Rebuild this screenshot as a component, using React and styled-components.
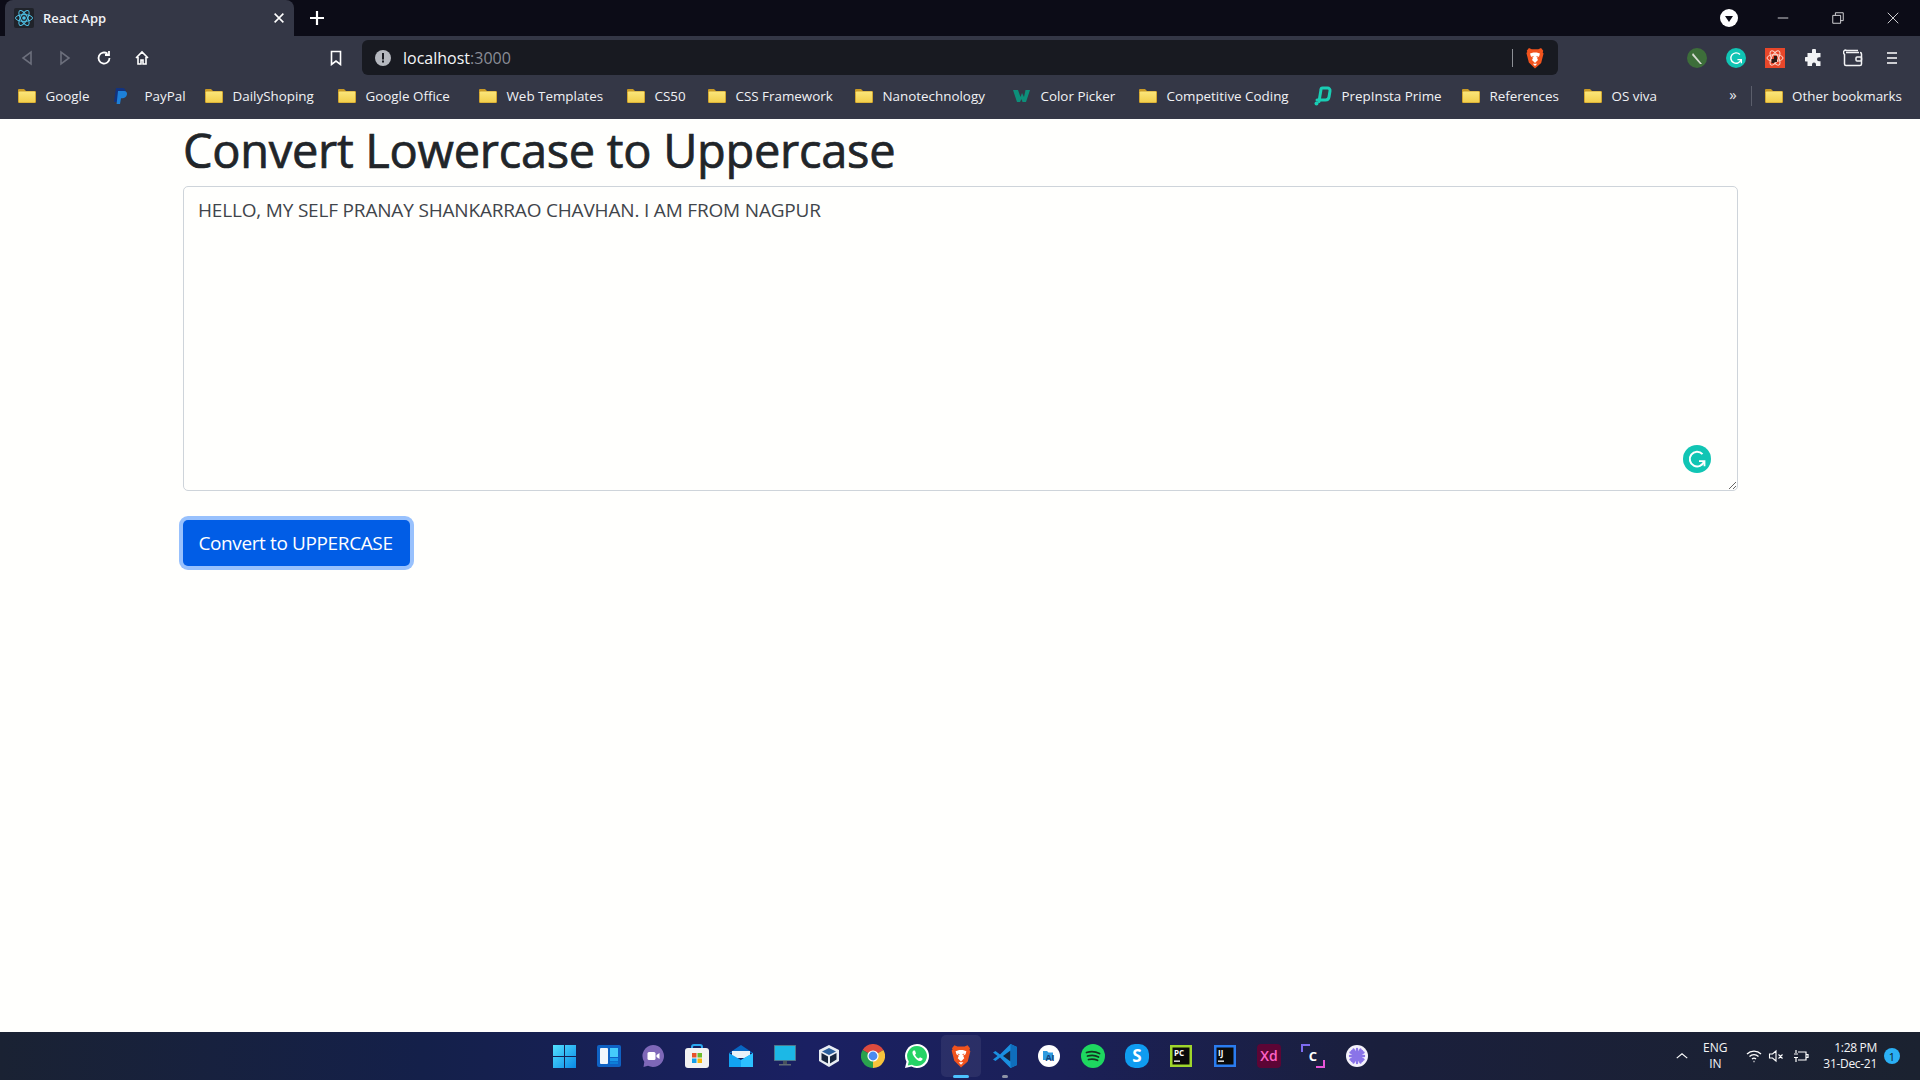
import React from 'react';
import styled, { createGlobalStyle } from 'styled-components';

const UI_FONT = `'Open Sans', 'Noto Sans', 'Liberation Sans', sans-serif`;

const GlobalStyle = createGlobalStyle`
    html, body { margin: 0; padding: 0; background: #fffffd; }
    body { font-family: ${UI_FONT}; }
`;

const Screen = styled.div`
    display: flex;
    flex-direction: column;
    width: 1920px;
    height: 1080px;
    overflow: hidden;
`;

/* ---------- browser chrome ---------- */

const TabStrip = styled.div`
    display: flex;
    align-items: flex-end;
    height: 36px;
    flex: none;
    background: #0c0c17;
`;

const Tab = styled.div`
    display: flex;
    align-items: center;
    width: 289px;
    height: 36px;
    margin-left: 5px;
    padding: 0 8px 0 9px;
    box-sizing: border-box;
    background: #343746;
    border-radius: 8px 8px 0 0;
    color: #f2f3f6;
`;

const TabTitle = styled.span`
    flex: 1;
    margin-left: 9px;
    font-size: 13px;
    font-weight: 600;
`;

const NewTab = styled.div`
    display: flex;
    width: 24px;
    height: 36px;
    margin-left: 11px;
    align-items: center;
    justify-content: center;
`;

const WindowControls = styled.div`
    display: flex;
    align-items: center;
    height: 36px;
    margin-left: auto;
`;

const ProfileSlot = styled.div`
    display: flex;
    margin-right: 17px;
`;

const WindowButton = styled.div`
    display: flex;
    width: 55px;
    height: 36px;
    align-items: center;
    justify-content: center;
`;

const Toolbar = styled.div`
    display: flex;
    align-items: flex-end;
    height: 39px;
    flex: none;
    background: #343746;
`;

const NavButton = styled.div`
    display: flex;
    width: 38.3px;
    height: 35px;
    align-items: center;
    justify-content: center;
`;

const NavGroup = styled.div`
    display: flex;
    width: 160px;
    padding-left: 8px;
`;

const BookmarkSlot = styled.div`
    display: flex;
    width: 194px;
    height: 35px;
    padding-right: 18px;
    box-sizing: border-box;
    align-items: center;
    justify-content: flex-end;
`;

const Omnibox = styled.div`
    display: flex;
    align-items: center;
    width: 1196px;
    height: 35px;
    padding: 0 12px 0 12px;
    box-sizing: border-box;
    background: #181a21;
    border-radius: 6px;
`;

const Url = styled.span`
    margin-left: 11px;
    font-size: 16px;
    color: #f4f5f7;
`;

const UrlPort = styled.span`
    color: #8a8d96;
`;

const OmniDivider = styled.div`
    width: 1px;
    height: 18px;
    margin-left: auto;
    margin-right: 11px;
    background: #8d9096;
`;

const Extensions = styled.div`
    display: flex;
    align-items: center;
    height: 35px;
    margin-left: auto;
    padding-right: 9px;
`;

const ExtensionSlot = styled.div`
    display: flex;
    width: 39px;
    align-items: center;
    justify-content: center;
`;

const BookmarkBar = styled.div`
    display: flex;
    align-items: center;
    height: 44px;
    flex: none;
    padding: 0 0 2px 18px;
    background: #343746;
    box-sizing: border-box;
`;

const BookmarkItem = styled.div`
    display: flex;
    align-items: center;
    flex: 0 0 ${props => props.$width}px;
    gap: 9.5px;
`;

const BookmarkLabel = styled.span`
    font-size: 13.4px;
    color: #f1f2f5;
    white-space: nowrap;
`;

const BarOverflow = styled.div`
    margin-left: auto;
    color: #e6e7ea;
    font-size: 15px;
    line-height: 15px;
    padding-bottom: 4px;
`;

const BarDivider = styled.div`
    width: 1px;
    height: 20px;
    margin: 0 13px 0 14px;
    background: #5b5e6b;
`;

const OtherBookmarks = styled(BookmarkItem)`
    padding-right: 18px;
`;

/* ---------- the page ---------- */

const Page = styled.main`
    flex: 1;
    padding: 2px 182px 0 183px;
    background: #fffffd;
`;

const Heading = styled.h1`
    margin: 0 0 6.6px;
    font-size: 47px;
    font-weight: 400;
    line-height: 58px;
    letter-spacing: -0.3px;
    color: #212529;
    -webkit-text-stroke: 0.7px #212529;
`;

const EditorWrap = styled.div`
    position: relative;
    height: 305px;
    margin-bottom: 29px;
`;

const Editor = styled.textarea`
    display: block;
    width: 100%;
    height: 100%;
    padding: 9px 14px;
    box-sizing: border-box;
    border: 1px solid #ced4da;
    border-radius: 5px;
    outline: none;
    background: #fffffd;
    color: #3f454b;
    font-family: ${UI_FONT};
    font-size: 19px;
    line-height: 29px;
    letter-spacing: -0.18px;
`;

const GrammarlyBadge = styled.div`
    position: absolute;
    right: 27px;
    bottom: 18px;
    display: flex;
`;

const PrimaryButton = styled.button`
    display: block;
    width: 227px;
    height: 46px;
    padding: 0 2px 0 0;
    border: 0;
    border-radius: 5px;
    background: #015de6;
    box-shadow: 0 0 0 4px #98c1fd;
    color: #fff;
    font-family: ${UI_FONT};
    font-size: 19px;
    letter-spacing: -0.38px;
`;

/* ---------- windows taskbar ---------- */

const Taskbar = styled.div`
    display: grid;
    grid-template-columns: 1fr auto 1fr;
    align-items: center;
    height: 48px;
    flex: none;
    background: linear-gradient(90deg, #1a2233 0%, #14204a 22%, #1a2062 42%, #1b2058 55%, #1a1f3c 72%, #1b2230 100%);
`;

const TaskIcons = styled.div`
    display: flex;
    grid-column: 2;
    height: 48px;
    padding-left: 1px;
`;

const TaskSlot = styled.div`
    position: relative;
    display: flex;
    width: 44px;
    height: 48px;
    align-items: center;
    justify-content: center;
    ${props => props.$active && `
        &::before {
            content: '';
            position: absolute;
            left: 2px;
            right: 2px;
            top: 3px;
            bottom: 3px;
            border-radius: 5px;
            background: rgba(255, 255, 255, 0.07);
        }
    `}
    svg { position: relative; }
`;

const RunDot = styled.span`
    position: absolute;
    left: 50%;
    bottom: 2px;
    height: 3px;
    width: ${props => props.$wide ? 16 : 6}px;
    margin-left: ${props => props.$wide ? -8 : -3}px;
    border-radius: 2px;
    background: ${props => props.$wide ? '#4cc2ff' : '#8e93a6'};
`;

const Tray = styled.div`
    display: flex;
    grid-column: 3;
    align-items: center;
    justify-content: flex-end;
    height: 48px;
    padding-right: 20px;
    color: #f4f5f7;
`;

const TrayGroup = styled.div`
    display: flex;
    align-items: center;
    margin-right: ${props => props.$gap}px;
`;

const Language = styled.div`
    width: 34px;
    margin-right: 14px;
    font-size: 12px;
    line-height: 16px;
    text-align: center;
`;

const Clock = styled.div`
    font-size: 12px;
    line-height: 16px;
    letter-spacing: -0.3px;
    text-align: right;
    margin-right: 7px;
`;

const NotificationBadge = styled.div`
    display: flex;
    width: 16px;
    height: 16px;
    align-items: center;
    justify-content: center;
    border-radius: 50%;
    background: #2bb0f5;
    color: #0b1b2a;
    font-size: 11px;
`;

/* ---------- icons ---------- */

const FolderIcon = () => (
    <svg width="18" height="16" viewBox="0 0 18 16">
        <defs>
            <linearGradient id="folderFill" x1="0" y1="0" x2="0" y2="1">
                <stop offset="0" stopColor="#fbe67a" />
                <stop offset="1" stopColor="#f2cf4c" />
            </linearGradient>
        </defs>
        <path d="M0 2a1 1 0 0 1 1-1h5l2 2h9a1 1 0 0 1 1 1v10a1 1 0 0 1-1 1H1a1 1 0 0 1-1-1z" fill="#c99a25" />
        <rect x="0.8" y="3.5" width="16.4" height="11" rx="0.8" fill="url(#folderFill)" />
    </svg>
);

const PayPalIcon = () => (
    <svg width="22" height="18" viewBox="0 0 22 18">
        <path d="M3 1h6c3 0 4 2 3.400 4.400C11.800 8 10 9 7.500 9H5.500L4.500 15H1z" fill="#12337f" />
        <path d="M5 4h6c2.600 0 3.400 1.800 2.900 3.800-.6 2.400-2.200 3.400-4.500 3.400H8L7 17H3.600z" fill="#1d80d8" />
    </svg>
);

const ColorPickerIcon = () => (
    <svg width="18" height="14" viewBox="0 0 18 14">
        <path d="M0 1h5l2.500 7L9 4l2 4 1.500-7H17l-4 12H9.500L8.500 10 7 13H4z" fill="#0d8f7a" />
    </svg>
);

const PrepInstaIcon = () => (
    <svg width="19" height="20" viewBox="0 0 19 20">
        <path d="M6 15.500 8 3.500a1.500 1.500 0 0 1 1.500-1.500h5a2.500 2.500 0 0 1 2.500 3l-1 6a3.500 3.500 0 0 1-3.500 3H4" fill="none" stroke="#19cdb4" strokeWidth="3" strokeLinecap="round" strokeLinejoin="round" />
        <circle cx="3.500" cy="17.500" r="2" fill="#19cdb4" />
    </svg>
);

const ReactIcon = () => (
    <svg width="20" height="20" viewBox="0 0 20 20">
        <rect width="20" height="20" rx="2" fill="#20232a" />
        <circle cx="10" cy="10" r="1.800" fill="#4fc3e8" />
        <g fill="none" stroke="#4fc3e8" strokeWidth="1">
            <ellipse cx="10" cy="10" rx="8.500" ry="3.400" />
            <ellipse cx="10" cy="10" rx="8.500" ry="3.400" transform="rotate(60 10 10)" />
            <ellipse cx="10" cy="10" rx="8.500" ry="3.400" transform="rotate(120 10 10)" />
        </g>
    </svg>
);

const Line = ({ d, size = 16, color = '#fff', width = 1.5, box = 16 }) => (
    <svg width={size} height={size} viewBox={`0 0 ${box} ${box}`} fill="none" stroke={color} strokeWidth={width}>
        <path d={d} />
    </svg>
);

const BraveIcon = ({ size = 22 }) => (
    <svg width={size} height={size} viewBox="0 0 20 20">
        <path d="M4.500 1 7 2h6l2.500-1 2 2.500-.5 1.500.8 1-2.200 8.500L10 19.500l-5.600-5.500-2.200-8.500.8-1L2.500 3.500z" fill="#f1531d" />
        <path d="M5.500 6 8.500 5h3l3 1-.7 2.500-2 1.300.9 2L10 14.500l-2.700-2.700.9-2-2-1.300z" fill="#fff" />
        <path d="M8 15.300h4l-2 1.900z" fill="#fff" />
        <path d="M7 8l2 .6-.8.8zM13 8l-2 .6.8.8z" fill="#f1531d" />
    </svg>
);

const GrammarlyIcon = ({ size = 28 }) => (
    <svg width={size} height={size} viewBox="0 0 28 28">
        <circle cx="14" cy="14" r="14" fill="#11c5b4" />
        <path d="M19.500 9.200a7.300 7.300 0 1 0 1.600 7" fill="none" stroke="#fff" strokeWidth="2" />
        <path d="M16 16.200h5.500v5" fill="none" stroke="#fff" strokeWidth="1.800" />
    </svg>
);

const ProfileIcon = () => (
    <svg width="18" height="18" viewBox="0 0 18 18">
        <circle cx="9" cy="9" r="9" fill="#fff" />
        <path d="M5 7h8l-4 6z" fill="#0c0c17" />
    </svg>
);

const FeatherExtension = () => (
    <svg width="20" height="20" viewBox="0 0 20 20">
        <circle cx="10" cy="10" r="10" fill="#3d6e3a" />
        <path d="M6 5l9 11-2 0L5 7z" fill="#d8dcd4" />
    </svg>
);

const ReactExtension = () => (
    <svg width="20" height="20" viewBox="0 0 20 20">
        <rect width="20" height="20" fill="#e8472a" />
        <g fill="none" stroke="#fbd9cf" strokeWidth="1">
            <ellipse cx="10" cy="10" rx="8" ry="3.400" />
            <ellipse cx="10" cy="10" rx="8" ry="3.400" transform="rotate(60 10 10)" />
            <ellipse cx="10" cy="10" rx="8" ry="3.400" transform="rotate(120 10 10)" />
        </g>
        <path d="M9 8h3v6H9zM6.500 11h3v4h-3z" fill="#2b1a16" />
    </svg>
);

const PuzzleIcon = () => (
    <svg width="18" height="18" viewBox="0 0 18 18">
        <path d="M7 1.500a2 2 0 0 1 4 0V4h4.500v4.200h-1.500a2 2 0 0 0 0 4h1.500V17H11v-1.500a2 2 0 0 0-4 0V17H2.500v-4.500H1a2.200 2.200 0 0 1 0-4.400h1.500V4H7z" fill="#f2f3f5" />
    </svg>
);

const WalletIcon = () => (
    <svg width="20" height="18" viewBox="0 0 20 18" fill="none" stroke="#f2f3f5" strokeWidth="1.500">
        <path d="M3 3.500h13M1.500 5v10a1.500 1.500 0 0 0 1.500 1.500h14a1.500 1.500 0 0 0 1.500-1.500V5a1.500 1.500 0 0 0-1.500-1.500" />
        <path d="M1.500 5A2 2 0 0 1 3.500 1.500H15" />
        <rect x="13" y="8" width="5.500" height="4" rx="1" />
    </svg>
);

const WindowsLogo = () => (
    <svg width="23" height="23" viewBox="0 0 23 23">
        <defs>
            <linearGradient id="winBlue" x1="0" y1="0" x2="1" y2="1">
                <stop offset="0" stopColor="#52e0fe" />
                <stop offset="1" stopColor="#0a8ae6" />
            </linearGradient>
        </defs>
        <path d="M0 0h11v11H0zM12 0h11v11H12zM0 12h11v11H0zM12 12h11v11H12z" fill="url(#winBlue)" />
    </svg>
);

const WidgetsIcon = () => (
    <svg width="24" height="22" viewBox="0 0 24 22">
        <rect width="24" height="22" rx="2" fill="#0f62c4" />
        <rect x="3" y="3" width="8" height="16" rx="1" fill="#f2f7fc" />
        <rect x="13" y="3" width="8" height="9" fill="#45cdfb" />
        <rect x="13" y="13" width="8" height="3" fill="#1a9aec" />
        <rect x="13" y="16.500" width="8" height="2.500" fill="#0d7fd8" />
    </svg>
);

const ChatIcon = () => (
    <svg width="24" height="24" viewBox="0 0 24 24">
        <path d="M12 1a11 11 0 1 1-5 20.800L2.500 23l.8-5A11 11 0 0 1 12 1z" fill="#7e68b8" />
        <rect x="6.500" y="8" width="8" height="8" rx="1.500" fill="#fff" />
        <path d="M15.500 11l3-2v6l-3-2z" fill="#fff" />
    </svg>
);

const StoreIcon = () => (
    <svg width="24" height="24" viewBox="0 0 24 24">
        <path d="M7 5V3a2 2 0 0 1 2-2h6a2 2 0 0 1 2 2v2" fill="none" stroke="#2ba8ee" strokeWidth="2" />
        <rect y="4" width="24" height="20" rx="3" fill="#f2f2f2" />
        <rect x="7" y="9" width="4.500" height="4.500" fill="#e8512a" />
        <rect x="12.500" y="9" width="4.500" height="4.500" fill="#6cbb2c" />
        <rect x="7" y="14.500" width="4.500" height="4.500" fill="#12a0ea" />
        <rect x="12.500" y="14.500" width="4.500" height="4.500" fill="#f8b60b" />
    </svg>
);

const MailIcon = () => (
    <svg width="24" height="22" viewBox="0 0 24 22">
        <path d="M0 8 12 0l12 8z" fill="#0766c2" />
        <path d="M3 6h18v7H3z" fill="#e9f1f8" />
        <path d="M0 8l12 7 12-7v14H0z" fill="#12a3f2" />
        <path d="M12 15l12-7v14H12z" fill="#2cc0ff" />
    </svg>
);

const MonitorIcon = () => (
    <svg width="22" height="22" viewBox="0 0 22 22">
        <rect width="22" height="16" fill="#5a6878" />
        <rect x="0.800" y="0.800" width="20.400" height="14.400" fill="#1cb8e6" />
        <rect x="9" y="16" width="4" height="3" fill="#46515c" />
        <rect x="5" y="19" width="12" height="1.500" fill="#5f6a75" />
    </svg>
);

const VirtualBoxIcon = () => (
    <svg width="22" height="24" viewBox="0 0 22 24">
        <path d="M11 1l10 5v11l-10 6-10-6V6z" fill="#e8edf3" />
        <path d="M11 4l7 3.500-7 3.500-7-3.500z" fill="#2a5f9c" />
        <path d="M3.500 9l6.500 3.500v7L3.500 16zM18.500 9 12 12.500v7l6.500-4z" fill="#17263e" />
    </svg>
);

const ChromeIcon = () => (
    <svg width="24" height="24" viewBox="0 0 24 24">
        <path d="M12 12 1.600 6A12 12 0 0 1 22.400 6z" fill="#dd4b3e" />
        <path d="M12 12 22.400 6A12 12 0 0 1 12 24z" fill="#f6c33c" />
        <path d="M12 12v12A12 12 0 0 1 1.600 6z" fill="#2aa24e" />
        <circle cx="12" cy="12" r="5.600" fill="#fff" />
        <circle cx="12" cy="12" r="4.400" fill="#4a8af0" />
    </svg>
);

const WhatsAppIcon = () => (
    <svg width="24" height="24" viewBox="0 0 24 24">
        <path d="M12 0a12 12 0 1 1-5.600 22.600L0 24l1.500-6.200A12 12 0 0 1 12 0z" fill="#fff" />
        <path d="M12 2a10 10 0 1 1-5 18.700L2.800 21.500l1-4A10 10 0 0 1 12 2z" fill="#25d366" />
        <path d="M8.500 6.500c-1.500 1-1.500 3 .5 6s4.500 5 6.500 4.500c1.500-.3 2.300-1.500 2-2.500l-2.500-1.300-1.200 1.300c-1.500-.5-3-2-3.800-3.800l1-1.200L10 6.500z" fill="#fff" />
    </svg>
);

const VSCodeIcon = () => (
    <svg width="24" height="24" viewBox="0 0 24 24">
        <path d="M17.500 0 24 3v18l-6.500 3L7 13.500 2.500 17 0 15.500 4.500 12 0 8.500 2.500 7 7 10.500z" fill="#1a8fe0" />
        <path d="M17.500 6.500v11L10 12z" fill="#14233f" />
        <path d="M17.500 0 24 3v18l-6.500 3z" fill="#0f6ebc" />
    </svg>
);

const AiBadgeIcon = () => (
    <svg width="22" height="22" viewBox="0 0 22 22">
        <circle cx="11" cy="11" r="11" fill="#fff" />
        <path d="M5 6h4l1.500 1.500H15V15H5z" fill="#2f9be0" />
        <text x="12" y="16" textAnchor="middle" fontSize="9" fontWeight="700" fontFamily={UI_FONT} fill="#123f7a">AI</text>
    </svg>
);

const SpotifyIcon = () => (
    <svg width="24" height="24" viewBox="0 0 24 24">
        <circle cx="12" cy="12" r="12" fill="#1ed760" />
        <path d="M5.500 8.500c4.500-1.300 9-1 13 1M6.500 12c3.500-1 8-.8 11 1M7.500 15.500c3-.8 6-.6 9 .8" fill="none" stroke="#14331f" strokeWidth="1.800" strokeLinecap="round" />
    </svg>
);

const SkypeIcon = () => (
    <svg width="24" height="24" viewBox="0 0 24 24">
        <rect width="24" height="24" rx="10" fill="#0f9cf0" />
        <text x="12" y="18" textAnchor="middle" fontSize="17" fontWeight="700" fontFamily={UI_FONT} fill="#fff">S</text>
    </svg>
);

const IdeIcon = ({ frame, label }) => (
    <svg width="22" height="22" viewBox="0 0 22 22">
        <rect width="22" height="22" fill={frame} />
        <rect x="2.500" y="2.500" width="17" height="17" fill="#0a0a0a" />
        <text x="4" y="11" fontSize="8" fontWeight="700" fontFamily={UI_FONT} fill="#fff">{label}</text>
        <rect x="4" y="15.500" width="6" height="1.300" fill="#fff" />
    </svg>
);

const XdIcon = () => (
    <svg width="24" height="24" viewBox="0 0 24 24">
        <rect width="24" height="24" rx="4" fill="#5c0535" />
        <text x="12" y="17" textAnchor="middle" fontSize="14" fontWeight="600" fontFamily={UI_FONT} fill="#ff61c7">Xd</text>
    </svg>
);

const CodeBlocksIcon = () => (
    <svg width="24" height="24" viewBox="0 0 24 24">
        <path d="M1 8V1h8" fill="none" stroke="#7d6bf0" strokeWidth="2" />
        <path d="M23 16v7h-8" fill="none" stroke="#e655d8" strokeWidth="2" />
        <text x="12" y="17" textAnchor="middle" fontSize="13" fontWeight="700" fontFamily={UI_FONT} fill="#fff">C</text>
    </svg>
);

const PetalIcon = () => (
    <svg width="22" height="22" viewBox="0 0 22 22">
        <circle cx="11" cy="11" r="11" fill="#f4f2fb" />
        <g stroke="#8a74e8" strokeWidth="2.400" strokeLinecap="round">
            <path d="M11 4v14M4 11h14M6 6l10 10M16 6 6 16M7.500 4.500l7 13M14.500 4.500l-7 13M4.500 7.500l13 7M17.500 7.500l-13 7" />
        </g>
        <circle cx="11" cy="11" r="2.200" fill="#8a74e8" />
    </svg>
);

/* ---------- data ---------- */

const bookmarks = [
    { name: 'Google', width: 95 },
    { name: 'PayPal', icon: <PayPalIcon />, width: 92 },
    { name: 'DailyShoping', width: 133 },
    { name: 'Google Office', width: 141 },
    { name: 'Web Templates', width: 148 },
    { name: 'CS50', width: 81 },
    { name: 'CSS Framework', width: 147 },
    { name: 'Nanotechnology', width: 158 },
    { name: 'Color Picker', icon: <ColorPickerIcon />, width: 126 },
    { name: 'Competitive Coding', width: 174 },
    { name: 'PrepInsta Prime', icon: <PrepInstaIcon />, width: 149 },
    { name: 'References', width: 122 },
    { name: 'OS viva' },
];

const taskIcons = [
    <WindowsLogo />, <WidgetsIcon />, <ChatIcon />, <StoreIcon />, <MailIcon />, <MonitorIcon />,
    <VirtualBoxIcon />, <ChromeIcon />, <WhatsAppIcon />,
];

const taskIconsAfter = [
    <AiBadgeIcon />, <SpotifyIcon />, <SkypeIcon />,
    <IdeIcon frame="#9fd62c" label="PC" />, <IdeIcon frame="#2a7cf0" label="IJ" />, <XdIcon />,
    <CodeBlocksIcon />, <PetalIcon />,
];

const App = () => (
    <Screen>
        <GlobalStyle />
        <TabStrip>
            <Tab>
                <ReactIcon />
                <TabTitle>React App</TabTitle>
                <Line d="M3 3l10 10M13 3 3 13" size={14} width={1.8} />
            </Tab>
            <NewTab><Line d="M8 1v14M1 8h14" size={16} width={2.2} /></NewTab>
            <WindowControls>
                <ProfileSlot><ProfileIcon /></ProfileSlot>
                <WindowButton><Line d="M2 8h12" size={14} width={1} color="#e8e8ea" /></WindowButton>
                <WindowButton><Line d="M2 5h9v9H2zM5 5V2h9v9h-3" size={14} width={1} color="#e8e8ea" /></WindowButton>
                <WindowButton><Line d="M2 2l12 12M14 2 2 14" size={14} width={1} color="#e8e8ea" /></WindowButton>
            </WindowControls>
        </TabStrip>
        <Toolbar>
            <NavGroup>
                <NavButton><Line d="M12 2v12L4 8z" color="#6c6f7c" width={1.6} /></NavButton>
                <NavButton><Line d="M4 2v12l8-6z" color="#6c6f7c" width={1.6} /></NavButton>
                <NavButton><Line d="M13.500 8A5.500 5.500 0 1 1 11.500 3.800M13 1v4h-4" width={1.8} /></NavButton>
                <NavButton><Line d="M2 8l6-6 6 6M4 7v7h3v-4h2v4h3V7" width={1.6} /></NavButton>
            </NavGroup>
            <BookmarkSlot><Line d="M3.500 1.500h9v13L8 11l-4.500 3.500z" width={1.6} /></BookmarkSlot>
            <Omnibox>
                <svg width="18" height="18" viewBox="0 0 18 18">
                    <circle cx="9" cy="9" r="8" fill="#b5b8bf" />
                    <rect x="8" y="4" width="2" height="6.500" fill="#181a21" />
                    <rect x="8" y="11.500" width="2" height="2" fill="#181a21" />
                </svg>
                <Url>localhost<UrlPort>:3000</UrlPort></Url>
                <OmniDivider />
                <BraveIcon size={22} />
            </Omnibox>
            <Extensions>
                <ExtensionSlot><FeatherExtension /></ExtensionSlot>
                <ExtensionSlot><GrammarlyIcon size={20} /></ExtensionSlot>
                <ExtensionSlot><ReactExtension /></ExtensionSlot>
                <ExtensionSlot><PuzzleIcon /></ExtensionSlot>
                <ExtensionSlot><WalletIcon /></ExtensionSlot>
                <ExtensionSlot><Line d="M3 3h10M3 8h10M3 13h10" size={16} width={1.5} /></ExtensionSlot>
            </Extensions>
        </Toolbar>
        <BookmarkBar>
            {bookmarks.map(b => (
                <BookmarkItem key={b.name} $width={b.width}>
                    {b.icon || <FolderIcon />}
                    <BookmarkLabel>{b.name}</BookmarkLabel>
                </BookmarkItem>
            ))}
            <BarOverflow>»</BarOverflow>
            <BarDivider />
            <OtherBookmarks>
                <FolderIcon />
                <BookmarkLabel>Other bookmarks</BookmarkLabel>
            </OtherBookmarks>
        </BookmarkBar>
        <Page>
            <Heading>Convert Lowercase to Uppercase</Heading>
            <EditorWrap>
                <Editor defaultValue="HELLO, MY SELF PRANAY SHANKARRAO CHAVHAN. I AM FROM NAGPUR" />
                <GrammarlyBadge><GrammarlyIcon /></GrammarlyBadge>
            </EditorWrap>
            <PrimaryButton>Convert to UPPERCASE</PrimaryButton>
        </Page>
        <Taskbar>
            <TaskIcons>
                {taskIcons.map((icon, i) => <TaskSlot key={i}>{icon}</TaskSlot>)}
                <TaskSlot $active><BraveIcon size={24} /><RunDot $wide /></TaskSlot>
                <TaskSlot><VSCodeIcon /><RunDot /></TaskSlot>
                {taskIconsAfter.map((icon, i) => <TaskSlot key={i}>{icon}</TaskSlot>)}
            </TaskIcons>
            <Tray>
                <TrayGroup $gap={9}><Line d="M2 10.500l6-5 6 5" size={14} width={1.3} /></TrayGroup>
                <Language>ENG<br />IN</Language>
                <TrayGroup $gap={6}>
                    <Line d="M1 6a10 10 0 0 1 14 0M3.500 8.500a6.500 6.500 0 0 1 9 0M6 11a3 3 0 0 1 4 0M7.500 13.500h1" size={16} width={1.3} />
                </TrayGroup>
                <TrayGroup $gap={9}>
                    <Line d="M1.500 6h3L8 3v10L4.500 10h-3zM10.500 6.500l4 4M14.500 6.500l-4 4" size={16} width={1.1} />
                </TrayGroup>
                <TrayGroup $gap={14}>
                    <Line d="M5 4h8v8H5M13 6.500h2v3h-2M1 6h4M1 9.500h4M3 2v3M3 10v4" size={16} width={1.2} />
                </TrayGroup>
                <Clock>1:28 PM<br />31-Dec-21</Clock>
                <NotificationBadge>1</NotificationBadge>
            </Tray>
        </Taskbar>
    </Screen>
);

export default App;
